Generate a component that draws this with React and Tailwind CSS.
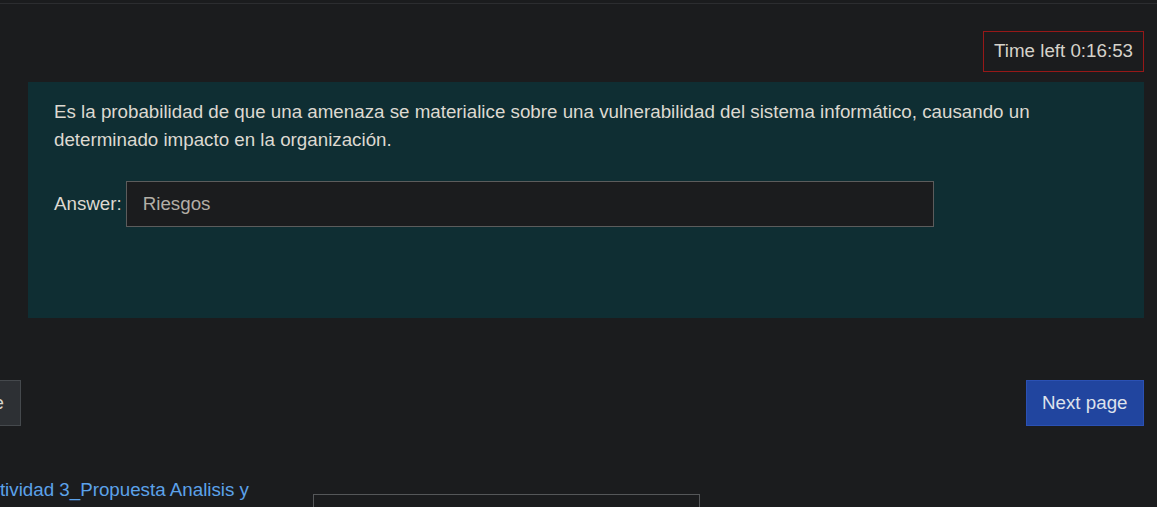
import React from 'react';

export default function App() {
    return (
        <div className="h-[507px] w-[1157px] overflow-hidden bg-[#1b1c1e] font-['Liberation_Sans',Arial,sans-serif] text-[#ddd9d1]">
            <div className="pt-[3px]">
                <div className="h-px bg-[#2c2d30]" />
            </div>

            <div className="flex justify-end pr-[13px] pt-[27px]">
                <div className="flex h-[41px] items-center border border-[#961818] px-[10px] text-[18.75px] text-[#d6d2ca]">
                    Time left 0:16:53
                </div>
            </div>

            <div className="ml-[28px] mr-[13px] mt-[10px] h-[236px] bg-[#0f2e33] px-[26px] pt-[16px]">
                <p className="text-[18.75px] leading-[28px]">
                    Es la probabilidad de que una amenaza se materialice sobre una vulnerabilidad del sistema informático, causando un
                    determinado impacto en la organización.
                </p>
                <div className="mt-[27px] flex items-center">
                    <label className="mr-[4px] text-[18.75px]">Answer:</label>
                    <div className="flex h-[46px] w-[808px] items-center border border-[#5c5c5c] bg-[#1b1c1e] pl-[16px] text-[18.75px] text-[#b3aea6]">
                        Riesgos
                    </div>
                </div>
            </div>

            <div className="mt-[62px] flex items-center justify-between pr-[13px]">
                <button className="ml-[-133px] h-[46px] border border-[#45494d] bg-[#2d3034] px-[16px] text-[18.75px] text-[#d8d4cc]">
                    Previous page
                </button>
                <button className="h-[46px] border border-[#2b51b4] bg-[#21459f] px-[15.5px] text-[18.75px] text-[#dde2ec]">
                    Next page
                </button>
            </div>

            <div className="mt-[48px] flex items-start">
                <a className="ml-[-22px] w-[280px] shrink-0 text-[18.75px] leading-[32px] text-[#5ca2ea]">
                    Actividad 3_Propuesta Analisis y Gestión de Riesgos
                </a>
                <div className="ml-[55px] mt-[20px] h-[40px] w-[387px] shrink-0 border border-[#555759] bg-[#1b1c1e]" />
            </div>
        </div>
    );
}
